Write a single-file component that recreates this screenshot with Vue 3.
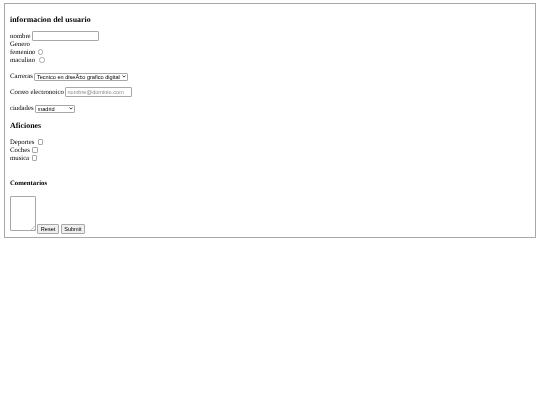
<script setup>
const carreras = ['Tecnico en diseÃ±o grafico digital']
const ciudades = ['madrid', 'barcelona', 'valencia']
</script>

<template>
  <form class="card" @submit.prevent>
    <h3 class="title">informacion del usuario</h3>
    <div class="row gap-h"><label>nombre</label><input type="text" class="text ml-name" /></div>
    <div class="row"><label>Genero</label></div>
    <div class="row"><label>femenino</label><input type="radio" name="genero" class="mark round ml-fem" /></div>
    <div class="row"><label>maculino</label><input type="radio" name="genero" class="mark round ml-mac" /></div>
    <div class="row gap-p">
      <label>Carreras</label>
      <select class="sel career"><option v-for="c in carreras" :key="c">{{ c }}</option></select>
    </div>
    <div class="row gap-p">
      <label>Correo electronoico</label>
      <input type="email" class="text ml-mail" placeholder="nombre@dominio.com" />
    </div>
    <div class="row gap-p">
      <label>ciudades</label>
      <select class="sel city"><option v-for="c in ciudades" :key="c">{{ c }}</option></select>
    </div>
    <h3 class="title gap-h">Aficiones</h3>
    <div class="row gap-h"><label>Deportes</label><input type="checkbox" class="mark ml-dep" /></div>
    <div class="row"><label>Coches</label><input type="checkbox" class="mark ml-coc" /></div>
    <div class="row"><label>musica</label><input type="checkbox" class="mark ml-mus" /></div>
    <h4 class="sub">Comentarios</h4>
    <div class="actions">
      <textarea class="area"></textarea>
      <input type="reset" value="Reset" class="btn reset" />
      <input type="submit" value="Submit" class="btn submit" />
    </div>
  </form>
</template>

<style scoped>
.card {
  width: 532px;
  box-sizing: border-box;
  margin: 3px 0 0 4px;
  padding: 11px 5px 3.5px;
  border: 1px solid #a8a8a8;
  font-family: "Liberation Serif", serif;
  font-size: 6.75px;
  line-height: 8px;
  color: #000;
  text-rendering: geometricPrecision;
  filter: blur(0.2px);
}
.title, .sub {
  margin: 0;
  height: 8px;
  line-height: 10px;
  font-weight: bold;
}
.title { font-size: 7.9px; }
.sub { font-size: 6.75px; margin-top: 17px; }
.row {
  display: flex;
  align-items: center;
  height: 8px;
}
.row label { margin-top: 2px; }
.gap-h { margin-top: 9px; }
.gap-p { margin-top: 8px; }
.text, .sel, .area, .btn {
  box-sizing: border-box;
  margin: 0;
  padding: 0 1px;
  border: 1px solid #a8a8a8;
  border-radius: 1px;
  background-color: #fff;
  font-family: "Liberation Sans", sans-serif;
  font-size: 5.6px;
  color: #000;
  outline: none;
}
.text {
  flex: none;
  width: 67px;
  height: 9.5px;
}
.text::placeholder { color: #8a8a8a; }
.ml-name { margin-left: 1.3px; }
.ml-mail { margin-left: 1.7px; }
.sel {
  appearance: none;
  flex: none;
  height: 8px;
  margin-top: 1px;
  padding: 0 6px 0 1.5px;
  background-image: url("data:image/svg+xml,%3Csvg xmlns='http://www.w3.org/2000/svg' width='5' height='4' viewBox='0 0 5 4'%3E%3Cpath d='M.6.8 2.5 2.8 4.4.8' fill='none' stroke='%23000' stroke-width='1'/%3E%3C/svg%3E");
  background-repeat: no-repeat;
  background-position: right 1px center;
  background-size: 4px 3.2px;
}
.career { width: 94px; margin-left: 1.5px; }
.city { width: 40px; margin-left: 1.4px; }
.mark {
  appearance: none;
  flex: none;
  box-sizing: border-box;
  width: 5.4px;
  height: 5.4px;
  margin: 0;
  border: 1px solid #a8a8a8;
  border-radius: 1px;
  background: #fff;
}
.round { border-radius: 50%; }
.ml-fem { margin-left: 2.5px; }
.ml-mac { margin-left: 4.2px; }
.ml-dep { margin-left: 3.5px; }
.ml-coc { margin-left: 2.5px; }
.ml-mus { margin-left: 2.5px; }
.actions {
  display: flex;
  align-items: flex-end;
  height: 37.5px;
  margin-top: 9px;
}
.area {
  flex: none;
  width: 26px;
  height: 35px;
  margin-bottom: 2.5px;
  resize: none;
  background-image: linear-gradient(135deg, transparent 50%, #c4c4c4 50%, #c4c4c4 62%, transparent 62%, transparent 76%, #c4c4c4 76%, #c4c4c4 88%, transparent 88%);
  background-repeat: no-repeat;
  background-position: right bottom;
  background-size: 4px 4px;
}
.btn {
  height: 9.4px;
  padding: 0;
  background: #efefef;
  text-align: center;
}
.reset { width: 21.5px; margin-left: 1.3px; }
.submit { width: 24.4px; margin-left: 1.9px; }
</style>

<style>
html, body { margin: 0; background: #fff; }
</style>
